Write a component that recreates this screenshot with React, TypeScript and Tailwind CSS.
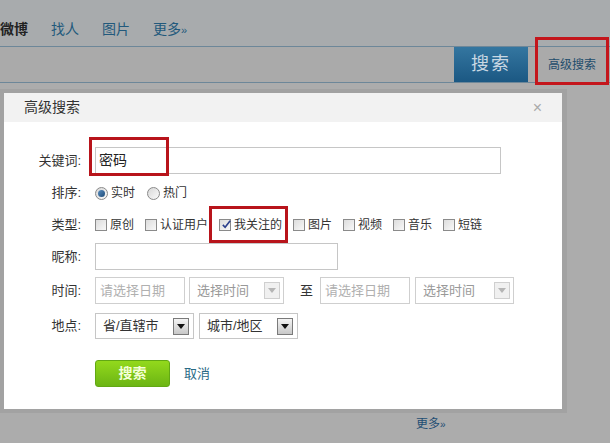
import React from "react";

const font = { fontFamily: '"Liberation Sans", "Noto Sans CJK SC", sans-serif' };

function Check({ checked = false }: { checked?: boolean }) {
  return (
    <span className="relative inline-block h-[12px] w-[12px] shrink-0 border border-[#8a8a8a] bg-gradient-to-br from-[#dcdcdc] to-[#f8f8f8]">
      {checked && (
        <svg viewBox="0 0 12 12" className="absolute left-[1px] top-[-1px] h-[11px] w-[11px]">
          <path d="M2 6.5 L4.5 9 L10 2" fill="none" stroke="#2b3f8c" strokeWidth="1.8" />
        </svg>
      )}
    </span>
  );
}

function Radio({ on = false }: { on?: boolean }) {
  return (
    <span className="flex h-[13px] w-[13px] shrink-0 items-center justify-center rounded-full border border-[#8a8a8a] bg-gradient-to-br from-[#d8d8d8] to-[#fafafa]">
      {on && <span className="h-[7px] w-[7px] rounded-full bg-gradient-to-br from-[#5b8fc0] to-[#1d4b78]" />}
    </span>
  );
}

function Arrow({ disabled = false }: { disabled?: boolean }) {
  return (
    <span
      className={
        disabled
          ? "flex h-[17px] w-[16px] items-center justify-center border border-[#cfcfcf] bg-[#f0f0f0]"
          : "flex h-[17px] w-[16px] items-center justify-center border border-[#7a7a7a] bg-gradient-to-b from-[#f4f4f4] to-[#c8c8c8]"
      }
    >
      <svg viewBox="0 0 8 5" className="h-[5px] w-[8px]">
        <path d="M0 0 L8 0 L4 5 Z" fill={disabled ? "#b5b5b5" : "#111"} />
      </svg>
    </span>
  );
}

function Label({ children }: { children: React.ReactNode }) {
  return <span className="w-[78px] shrink-0 pr-[1px] text-right text-[13px] text-[#333]">{children}</span>;
}

const types = ["原创", "认证用户", "我关注的", "图片", "视频", "音乐", "短链"];

export default function App() {
  return (
    <div className="relative h-[443px] w-[610px] overflow-hidden bg-[#acacac]" style={font}>
      {/* top nav */}
      <div className="flex h-[46px] items-end gap-[23px] bg-[#a8abad] pb-[6px] text-[14px]">
        <span className="font-bold text-[#222]">微博</span>
        <span className="text-[#22597c]">找人</span>
        <span className="text-[#22597c]">图片</span>
        <span className="text-[#22597c]">更多<span className="text-[11px]">»</span></span>
      </div>
      {/* search row */}
      <div className="flex h-[37px] border-y border-[#6d8799] bg-[#aaaaaa]">
        <div className="w-[454px]" />
        <div className="flex w-[74px] items-center justify-center bg-gradient-to-b from-[#3476a0] to-[#1b5883] text-[18px] tracking-[2px] text-[#c9d8e3]">
          搜索
        </div>
        <div className="flex flex-1 items-center justify-center pl-[6px] text-[12px] text-[#1f4d6c]">高级搜索</div>
      </div>
      <div className="absolute left-[535px] top-[37px] h-[48px] w-[74px] border-[3px] border-[#c4161c]" />

      {/* dialog */}
      <div className="mt-[6px] w-[567px] border-[4px] border-r-[5px] border-[#a2a2a2] bg-white">
        <div className="flex h-[29px] items-center justify-between bg-[#f2f2f2] pl-[20px] pr-[20px] text-[14px] text-[#333]">
          <span>高级搜索</span>
          <span className="text-[16px] leading-none text-[#aaa]">×</span>
        </div>

        <div className="relative flex flex-col pb-[22px] text-[12px] text-[#333]">
          {/* keyword */}
          <div className="mt-[25px] flex h-[27px] items-center gap-[13px]">
            <Label>关键词:</Label>
            <div className="flex h-[27px] w-[406px] items-center border border-[#c6c6c6] pl-[3px] text-[14px] text-[#222]">密码</div>
          </div>
          {/* sort */}
          <div className="mt-[9px] flex h-[20px] items-center gap-[13px]">
            <Label>排序:</Label>
            <div className="flex items-center">
              <Radio on />
              <span className="ml-[3px] mr-[12px]">实时</span>
              <Radio />
              <span className="ml-[3px]">热门</span>
            </div>
          </div>
          {/* type */}
          <div className="mt-[12px] flex h-[20px] items-center gap-[13px]">
            <Label>类型:</Label>
            <div className="flex items-center gap-[11px]">
              {types.map((t) => (
                <span key={t} className="flex items-center gap-[3px]">
                  <Check checked={t === "我关注的"} />
                  <span>{t}</span>
                </span>
              ))}
            </div>
          </div>
          {/* nickname */}
          <div className="mt-[8px] flex h-[27px] items-center gap-[13px]">
            <Label>昵称:</Label>
            <div className="h-[27px] w-[243px] border border-[#c6c6c6]" />
          </div>
          {/* time */}
          <div className="mt-[7px] flex h-[27px] items-center gap-[13px]">
            <Label>时间:</Label>
            <div className="flex items-center text-[13px] text-[#b0b0b0]">
              <div className="flex h-[27px] w-[90px] items-center border border-[#cfcfcf] pl-[4px]">请选择日期</div>
              <div className="ml-[4px] flex h-[27px] w-[95px] items-center justify-between border border-[#cfcfcf] pl-[7px] pr-[3px] text-[#999]">
                <span>选择时间</span>
                <Arrow disabled />
              </div>
              <span className="ml-[16px] mr-[7px] text-[#333]">至</span>
              <div className="flex h-[27px] w-[90px] items-center border border-[#cfcfcf] pl-[4px]">请选择日期</div>
              <div className="ml-[5px] flex h-[27px] w-[99px] items-center justify-between border border-[#cfcfcf] pl-[7px] pr-[3px] text-[#999]">
                <span>选择时间</span>
                <Arrow disabled />
              </div>
            </div>
          </div>
          {/* place */}
          <div className="mt-[9px] flex h-[26px] items-center gap-[13px]">
            <Label>地点:</Label>
            <div className="flex items-center text-[13px] text-[#333]">
              <div className="flex h-[26px] w-[99px] items-center justify-between border border-[#c6c6c6] pl-[7px] pr-[4px]">
                <span>省/直辖市</span>
                <Arrow />
              </div>
              <div className="ml-[5px] flex h-[26px] w-[99px] items-center justify-between border border-[#c6c6c6] pl-[7px] pr-[4px]">
                <span>城市/地区</span>
                <Arrow />
              </div>
            </div>
          </div>
          {/* buttons */}
          <div className="mt-[21px] flex h-[27px] items-center">
            <div className="ml-[91px] flex h-[27px] w-[75px] items-center justify-center rounded-[3px] border border-[#62a814] bg-gradient-to-b from-[#93d91c] to-[#6cb514] text-[14px] font-bold text-[#f4ffd8]">
              搜索
            </div>
            <span className="ml-[14px] text-[13px] text-[#2a6a86]">取消</span>
          </div>

          {/* annotation boxes */}
          <div className="absolute left-[85px] top-[15px] h-[39px] w-[80px] border-[3px] border-[#b8141b]" />
          <div className="absolute left-[205px] top-[84px] h-[37px] w-[79px] border-[3px] border-[#b8141b]" />
        </div>
      </div>

      <div className="ml-[416px] mt-[2px] text-[12px] text-[#1f4e73]">
        更多<span className="text-[10px]">»</span>
      </div>
    </div>
  );
}
